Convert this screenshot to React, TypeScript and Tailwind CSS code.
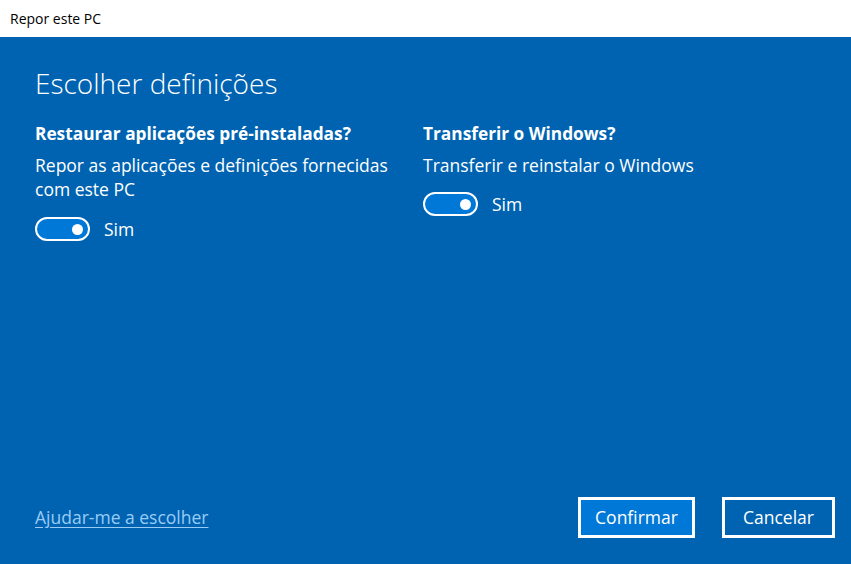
import React from "react";

function Toggle() {
  return (
    <div className="flex items-center gap-[14px]">
      <div className="w-[55px] h-[24px] rounded-full border-2 border-white bg-[#0078d7] flex items-center justify-end pr-[5px]">
        <div className="w-[11px] h-[11px] rounded-full bg-white" />
      </div>
      <span className="text-[17.5px]">Sim</span>
    </div>
  );
}

export default function App() {
  return (
    <div
      className="w-[851px] h-[564px] flex flex-col bg-[#0063b1] text-white"
      style={{ fontFamily: '"Open Sans", "Noto Sans", sans-serif' }}
    >
      <div className="h-[37px] bg-white text-black text-[14px] flex items-center pl-[10px]">Repor este PC</div>
      <div className="flex-1 flex flex-col px-[35px] pb-[26px]">
        <h1 className="mt-[24px] text-[28px] font-light leading-[44px]">Escolher definições</h1>
        <div className="mt-[15px] grid grid-cols-[388px_1fr]">
          <div className="flex flex-col">
            <div className="text-[17.3px] font-bold leading-[28px]">Restaurar aplicações pré-instaladas?</div>
            <div className="mt-[5px] text-[17.5px] leading-[24px] w-[370px]">Repor as aplicações e definições fornecidas com este PC</div>
            <div className="mt-[15px]"><Toggle /></div>
          </div>
          <div className="flex flex-col">
            <div className="text-[17.3px] font-bold leading-[28px]">Transferir o Windows?</div>
            <div className="mt-[5px] text-[17.5px] leading-[24px]">Transferir e reinstalar o Windows</div>
            <div className="mt-[14px]"><Toggle /></div>
          </div>
        </div>
        <div className="mt-auto flex items-center justify-between">
          <a className="text-[17.5px] text-[#99ccf5] underline underline-offset-[3px]">Ajudar-me a escolher</a>
          <div className="flex gap-[27px] mr-[-19px]">
            <button className="w-[117px] h-[41px] border-[3px] border-white bg-[#0078d7] text-[17.5px]">Confirmar</button>
            <button className="w-[113px] h-[41px] border-[3px] border-white text-[17.5px]">Cancelar</button>
          </div>
        </div>
      </div>
    </div>
  );
}
